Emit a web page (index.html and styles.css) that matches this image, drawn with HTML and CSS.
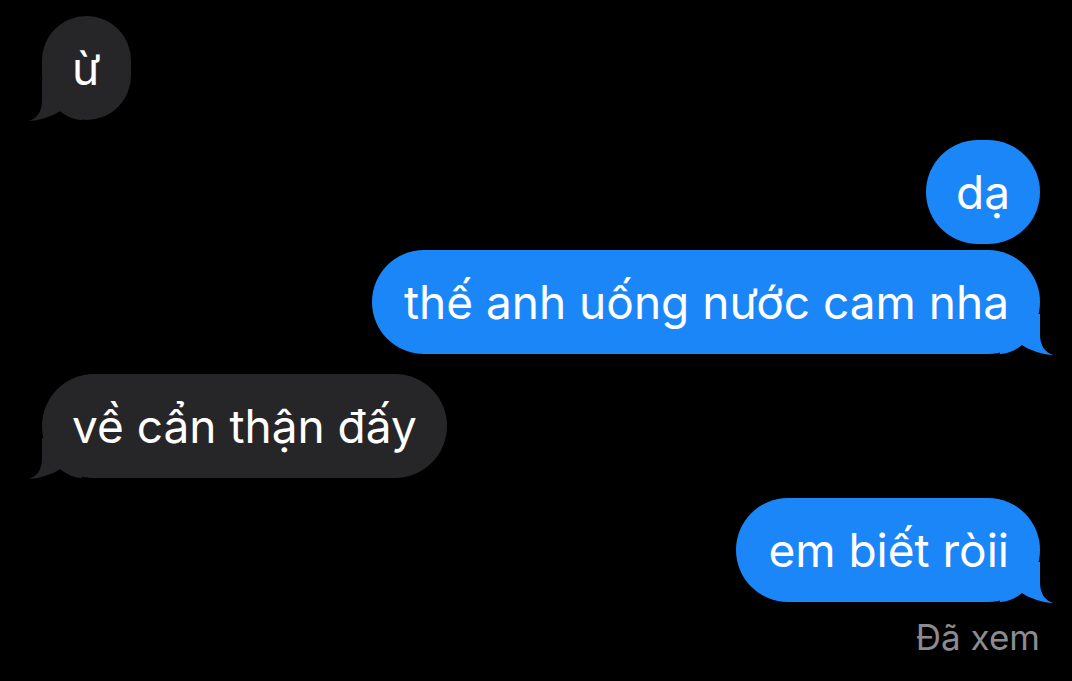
FILE: index.html
```html
<!DOCTYPE html>
<html lang="vi">
<head>
<meta charset="utf-8">
<title>Tin nhắn</title>
<link rel="stylesheet" href="styles.css">
</head>
<body>
<main class="thread">
  <div class="group in">
    <div class="bubble in tail">
      <svg class="tail-svg" viewBox="-14 -40 54 42" width="54" height="42"><path d="M0 -40 L0 -20 C0 -8 -5 -2 -13 1 C-5 1 12 -4 18 -9 C24 -4 32 0 40 0 L40 -40 Z"/></svg>
      <span class="text">ừ</span>
    </div>
  </div>

  <div class="group out">
    <div class="bubble out"><span class="text">dạ</span></div>
    <div class="bubble out tail">
      <svg class="tail-svg" viewBox="-40 -40 54 42" width="54" height="42"><path d="M0 -40 L0 -20 C0 -8 5 -2 13 1 C5 1 -12 -4 -18 -9 C-24 -4 -32 0 -40 0 L-40 -40 Z"/></svg>
      <span class="text">thế anh uống nước cam nha</span>
    </div>
  </div>

  <div class="group in">
    <div class="bubble in tail">
      <svg class="tail-svg" viewBox="-14 -40 54 42" width="54" height="42"><path d="M0 -40 L0 -20 C0 -8 -5 -2 -13 1 C-5 1 12 -4 18 -9 C24 -4 32 0 40 0 L40 -40 Z"/></svg>
      <span class="text">về cẩn thận đấy</span>
    </div>
  </div>

  <div class="group out">
    <div class="bubble out tail">
      <svg class="tail-svg" viewBox="-40 -40 54 42" width="54" height="42"><path d="M0 -40 L0 -20 C0 -8 5 -2 13 1 C5 1 -12 -4 -18 -9 C-24 -4 -32 0 -40 0 L-40 -40 Z"/></svg>
      <span class="text">em biết ròii</span>
    </div>
    <div class="status">Đã xem</div>
  </div>
</main>
</body>
</html>
```

FILE: styles.css
```css
html, body {
  margin: 0;
  padding: 0;
  background: #000;
}

body {
  width: 1072px;
  height: 681px;
  overflow: hidden;
  font-family: Inter, "Liberation Sans", Arial, sans-serif;
  -webkit-font-smoothing: antialiased;
}

.thread {
  display: flex;
  flex-direction: column;
  gap: 20px;
  padding: 16px 32px 0 42px;
}

.group {
  display: flex;
  flex-direction: column;
  gap: 6px;
}

.group.in {
  align-items: flex-start;
}

.group.out {
  align-items: flex-end;
}

.bubble {
  position: relative;
  box-sizing: border-box;
  height: 104px;
  padding: 24px 30px;
  border-radius: 52px;
  font-size: 46px;
  line-height: 56px;
  color: #fff;
  white-space: nowrap;
}

.bubble.out.tail {
  padding-left: 32px;
  padding-right: 31px;
}

.text {
  position: relative;
}

.bubble.in {
  background: #262628;
}

.bubble.out {
  background: #1a86f8;
}

.tail-svg {
  position: absolute;
  bottom: -2px;
}

.bubble.out .tail-svg {
  right: -14px;
  fill: #1a86f8;
}

.bubble.in .tail-svg {
  left: -14px;
  fill: #262628;
}

.status {
  margin-top: 9px;
  font-size: 35px;
  line-height: 40px;
  color: #8b8b90;
}
```
